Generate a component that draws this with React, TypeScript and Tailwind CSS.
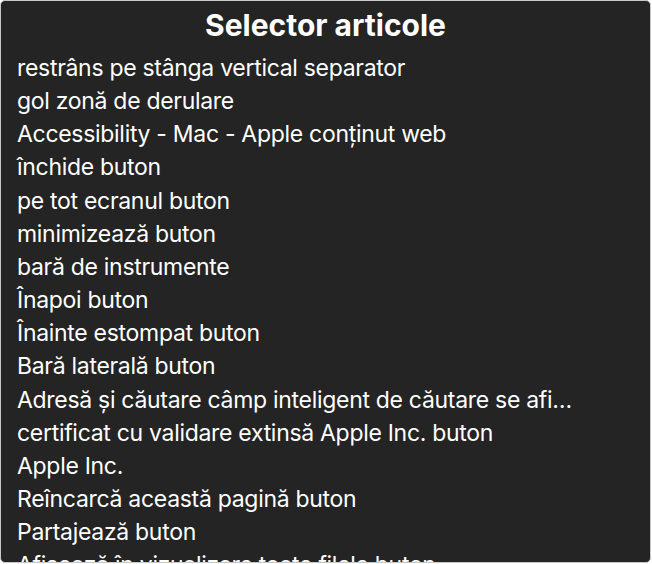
const items = [
  "restrâns pe stânga vertical separator",
  "gol zonă de derulare",
  "Accessibility - Mac - Apple conținut web",
  "închide buton",
  "pe tot ecranul buton",
  "minimizează buton",
  "bară de instrumente",
  "Înapoi buton",
  "Înainte estompat buton",
  "Bară laterală buton",
  "Adresă și căutare câmp inteligent de căutare se afi…",
  "certificat cu validare extinsă Apple Inc. buton",
  "Apple Inc.",
  "Reîncarcă această pagină buton",
  "Partajează buton",
  "Afișează în vizualizare toate filele buton",
];

export default function App() {
  return (
    <div className="w-[652px] h-[564px] bg-white">
      <div
        className="w-[651px] h-[563px] overflow-hidden rounded-[5px] border border-[#c9c9c9] bg-[#242424] text-white flex flex-col"
        style={{ fontFamily: "Inter, 'Noto Sans', sans-serif" }}
      >
        <h1 className="h-[51px] shrink-0 pt-[6px] text-center text-[30px] leading-[36px] font-bold">
          Selector articole
        </h1>
        <ul className="px-4">
          {items.map((item) => (
            <li key={item} className="text-[23px] leading-[33.15px] tracking-[-0.3px] whitespace-nowrap">
              {item}
            </li>
          ))}
        </ul>
      </div>
    </div>
  );
}
